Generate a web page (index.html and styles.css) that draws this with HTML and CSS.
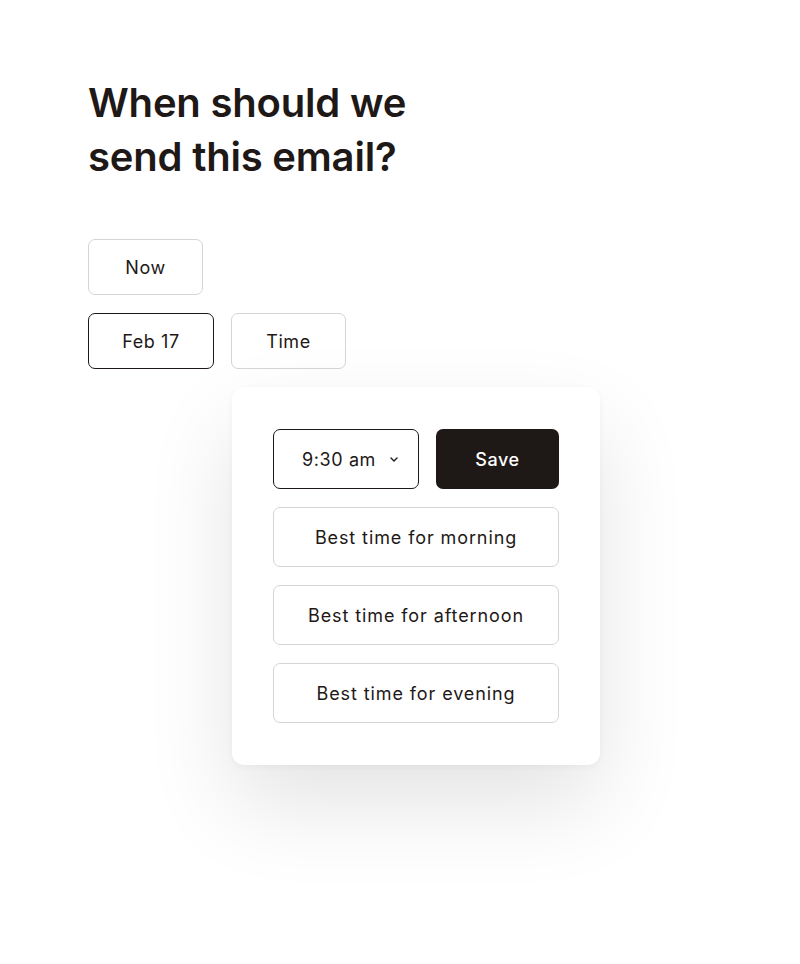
FILE: index.html
```html
<!DOCTYPE html>
<html lang="en">
<head>
<meta charset="utf-8">
<title>When should we send this email?</title>
<link rel="stylesheet" href="styles.css">
</head>
<body>
<main class="page">
  <h1 class="title">When should we<br>send this email?</h1>
  <div class="options">
    <div class="row">
      <button class="chip">Now</button>
    </div>
    <div class="row">
      <button class="chip chip--date chip--active">Feb 17</button>
      <button class="chip">Time</button>
    </div>
    <div class="popover">
      <div class="popover-top">
        <button class="select"><span>9:30 am</span>
          <svg class="chevron" width="8" height="5" viewBox="0 0 8 5"><path d="M1 1l3 3 3-3" fill="none" stroke="#1e1817" stroke-width="1.4" stroke-linecap="round" stroke-linejoin="round"/></svg>
        </button>
        <button class="save">Save</button>
      </div>
      <button class="preset">Best time for morning</button>
      <button class="preset">Best time for afternoon</button>
      <button class="preset">Best time for evening</button>
    </div>
  </div>
</main>
</body>
</html>
```

FILE: styles.css
```css
* { box-sizing: border-box; }
html, body { margin: 0; background: #ffffff; }
body {
  font-family: Inter, "Liberation Sans", sans-serif;
  color: #1e1817;
}
.page {
  padding: 76px 0 0 88px;
  height: 964px;
}
.title {
  margin: 0;
  font-size: 40px;
  line-height: 54px;
  font-weight: 600;
  letter-spacing: -0.2px;
  color: #1e1817;
}
.options {
  margin-top: 55px;
  display: flex;
  flex-direction: column;
  gap: 18px;
}
.row {
  display: flex;
  gap: 17px;
}
button {
  font-family: inherit;
  color: #1e1817;
  cursor: pointer;
  letter-spacing: 0.6px;
}
.chip {
  width: 115px;
  height: 56px;
  background: #fff;
  border: 1.5px solid #d5d5d5;
  border-radius: 7px;
  font-size: 18px;
  font-weight: 400;
}
.chip--date { width: 126px; }
.chip--active { border-color: #1e1817; }
.popover {
  margin-left: 144px;
  width: 368px;
  padding: 42px 41px 42px;
  background: #fff;
  border-radius: 12px;
  box-shadow: 0 40px 90px rgba(0, 0, 0, 0.11), 0 2px 6px rgba(0, 0, 0, 0.04);
  display: flex;
  flex-direction: column;
  gap: 18px;
}
.popover-top {
  display: flex;
  gap: 17px;
}
.select {
  width: 146px;
  height: 60px;
  padding: 0 0 0 8px;
  background: #fff;
  border: 1.5px solid #1e1817;
  border-radius: 7px;
  font-size: 18px;
  display: flex;
  align-items: center;
  justify-content: center;
  gap: 14px;
}
.chevron { margin-top: 1px; }
.save {
  flex: 1;
  height: 60px;
  background: #1e1817;
  color: #fff;
  border: none;
  border-radius: 7px;
  font-size: 18px;
  font-weight: 500;
}
.preset {
  height: 60px;
  background: #fff;
  border: 1.5px solid #d5d5d5;
  border-radius: 7px;
  font-size: 18px;
  letter-spacing: 0.9px;
}
```
